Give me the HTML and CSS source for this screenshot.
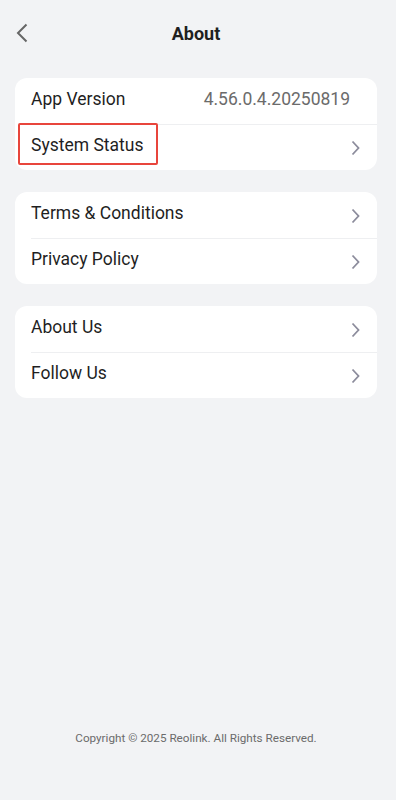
FILE: index.html
```html
<!DOCTYPE html>
<html lang="en">
<head>
<meta charset="utf-8">
<title>About</title>
<link rel="stylesheet" href="styles.css">
</head>
<body>
<div class="page">
  <header class="topbar">
    <span class="back">
      <svg width="12" height="20" viewBox="0 0 12 20"><path d="M10.5 1.5 L2 10 L10.5 18.5" fill="none" stroke="#666" stroke-width="2"/></svg>
    </span>
    <h1 class="title">About</h1>
  </header>
  <main class="content">
    <section class="card">
      <div class="row">
        <span class="label">App Version</span>
        <span class="value">4.56.0.4.20250819</span>
      </div>
      <div class="row">
        <span class="label">System Status</span>
        <svg class="chev" width="9" height="16" viewBox="0 0 9 16"><path d="M1.5 1.5 L7.5 8 L1.5 14.5" fill="none" stroke="#8c8c9c" stroke-width="1.8"/></svg>
        <span class="highlight"></span>
      </div>
    </section>
    <section class="card">
      <div class="row">
        <span class="label">Terms &amp; Conditions</span>
        <svg class="chev" width="9" height="16" viewBox="0 0 9 16"><path d="M1.5 1.5 L7.5 8 L1.5 14.5" fill="none" stroke="#8c8c9c" stroke-width="1.8"/></svg>
      </div>
      <div class="row">
        <span class="label">Privacy Policy</span>
        <svg class="chev" width="9" height="16" viewBox="0 0 9 16"><path d="M1.5 1.5 L7.5 8 L1.5 14.5" fill="none" stroke="#8c8c9c" stroke-width="1.8"/></svg>
      </div>
    </section>
    <section class="card">
      <div class="row">
        <span class="label">About Us</span>
        <svg class="chev" width="9" height="16" viewBox="0 0 9 16"><path d="M1.5 1.5 L7.5 8 L1.5 14.5" fill="none" stroke="#8c8c9c" stroke-width="1.8"/></svg>
      </div>
      <div class="row">
        <span class="label">Follow Us</span>
        <svg class="chev" width="9" height="16" viewBox="0 0 9 16"><path d="M1.5 1.5 L7.5 8 L1.5 14.5" fill="none" stroke="#8c8c9c" stroke-width="1.8"/></svg>
      </div>
    </section>
  </main>
  <footer class="footer">Copyright © 2025 Reolink. All Rights Reserved.</footer>
</div>
</body>
</html>
```
FILE: styles.css
```css
* { box-sizing: border-box; }
html, body { margin: 0; padding: 0; }
body {
  background: #f2f3f5;
  font-family: Roboto, "Liberation Sans", sans-serif;
  color: #1f1f1f;
}
.page {
  width: 392px;
  height: 800px;
  display: flex;
  flex-direction: column;
}
.topbar {
  height: 66px;
  display: flex;
  align-items: center;
  justify-content: center;
  position: relative;
}
.back {
  position: absolute;
  left: 16px;
  top: 23px;
  display: flex;
}
.title {
  margin: 0;
  font-size: 18px;
  font-weight: 700;
  color: #1f1f1f;
}
.content {
  padding: 12px 15px 0 15px;
  display: flex;
  flex-direction: column;
  gap: 22px;
  flex: 1;
}
.card {
  background: #fff;
  border-radius: 12px;
  padding-left: 16px;
  overflow: hidden;
}
.row {
  height: 46px;
  display: flex;
  align-items: center;
  justify-content: space-between;
  padding-right: 17px;
  position: relative;
}
.row + .row {
  border-top: 1px solid #eeeff1;
}
.label {
  font-size: 17.5px;
  color: #1f1f1f;
  padding-bottom: 5px;
}
.value {
  font-size: 17.5px;
  color: #6b6b6b;
  padding-right: 10px;
  padding-bottom: 5px;
}
.chev { display: block; margin-top: 1px; }
.highlight {
  position: absolute;
  left: -13px;
  top: -2px;
  width: 140px;
  height: 42px;
  border: 2px solid #e8453c;
  border-radius: 2px;
}
.footer {
  text-align: center;
  font-size: 11.7px;
  color: #6b6b6b;
  padding-bottom: 55px;
}
```
